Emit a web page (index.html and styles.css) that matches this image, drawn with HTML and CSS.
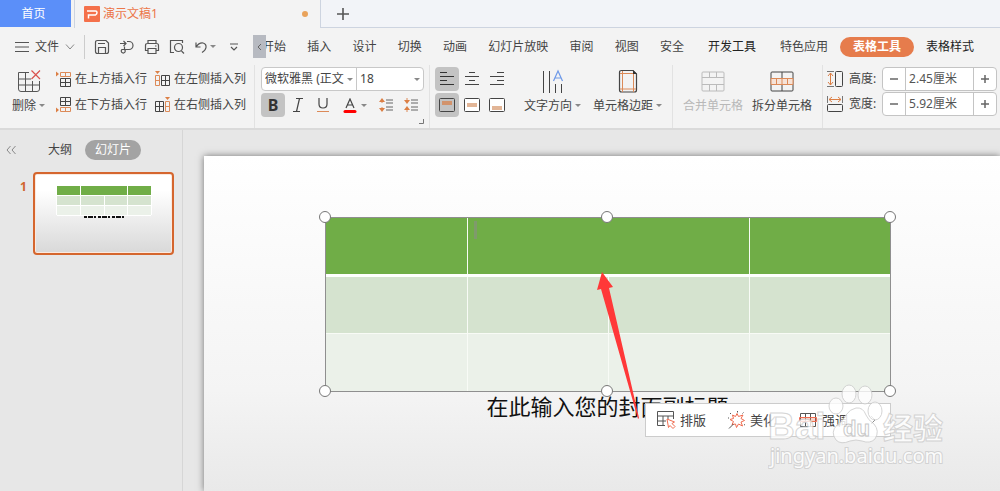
FILE: index.html
```html
<!DOCTYPE html>
<html lang="zh-CN">

<head>
    <meta charset="UTF-8">
    <meta name="viewport" content="width=device-width, initial-scale=1.0">
    <title>演示文稿1</title>
    <link rel="stylesheet" href="styles.css">
</head>

<body>

    <!-- 标签栏 -->
    <header class="tabs">
        <button class="tab-home">首页</button>
        <div class="tab-doc">
            <svg width="16" height="16" viewBox="0 0 16 16"><rect width="16" height="16" rx="1" fill="#f4704a"/><path d="M3 5H11.500Q13 5 13 6.500T11.500 9H4.500V12.500" fill="none" stroke="#fff" stroke-width="1.500"/></svg>
            <span>演示文稿1</span>
            <i class="unsaved"></i>
        </div>
        <div class="tab-rest">
            <button class="tab-new" aria-label="新建">
                <svg width="12" height="12" viewBox="0 0 12 12"><path d="M6 0V12M0 6H12" stroke="#555" stroke-width="1.600"/></svg>
            </button>
        </div>
    </header>

    <!-- 菜单栏 -->
    <div class="menu">
        <button class="file">
            <svg width="14" height="12" viewBox="0 0 14 12"><path d="M0 1.500H14M0 6H14M0 10.500H14" stroke="#555"/></svg>
            <span>文件</span>
            <svg width="10" height="6" viewBox="0 0 10 6"><path d="M1 .5L5 5L9 .5" fill="none" stroke="#888"/></svg>
        </button>
        <div class="quick">
            <button aria-label="保存"><svg width="16" height="16" viewBox="0 0 16 16"><path d="M1.500 3.500Q1.500 1.500 3.500 1.500H12L14.500 4V12.500Q14.500 14.500 12.500 14.500H3.500Q1.500 14.500 1.500 12.500ZM4 4.500H11M4.500 14V8.500H11.500V14"/></svg></button>
            <button aria-label="输出"><svg width="16" height="16" viewBox="0 0 16 16"><path d="M1 4.500H7M4.500 2L7 4.500L4.500 7M8 2.500H10A4 4 0 0 1 10 10.500H5.500M5.500 7.500V10.500A2 2 0 1 1 3 10.500H5.500"/></svg></button>
            <button aria-label="打印"><svg width="16" height="16" viewBox="0 0 16 16"><path d="M4 4.500V1.500H12V4.500M4 11.500H1.500V6.500Q1.500 4.500 3.500 4.500H12.500Q14.500 4.500 14.500 6.500V11.500H12M4 9.500H12V14.500H4ZM11 7H12.500"/></svg></button>
            <button aria-label="打印预览"><svg width="16" height="16" viewBox="0 0 16 16"><path d="M5 13.500H1.500V1.500H13.500V4M12.500 12L15 14.500"/><circle cx="9.500" cy="8.500" r="4"/></svg></button>
            <button class="undo" aria-label="撤销"><svg width="14" height="16" viewBox="0 0 14 16"><path d="M2 3.500V8H6.500M2 8Q5 3.500 9 4Q12.500 5 12 8.500Q11.500 11.500 8 13.500"/></svg><i class="caret"></i></button>
            <button aria-label="更多"><svg width="8" height="8" viewBox="0 0 8 8"><path d="M0 1H8M1 4L4 7L7 4"/></svg></button>
        </div>
        <button class="scroll-left" aria-label="向左">
            <svg width="5" height="8" viewBox="0 0 5 8"><path d="M4 1L1 4L4 7" fill="none" stroke="#666"/></svg>
        </button>
        <nav class="nav-main">
            <a href="#">开始</a>
            <a href="#">插入</a>
            <a href="#">设计</a>
            <a href="#">切换</a>
            <a href="#">动画</a>
            <a href="#">幻灯片放映</a>
            <a href="#">审阅</a>
            <a href="#">视图</a>
            <a href="#">安全</a>
        </nav>
        <nav class="nav-tools">
            <a href="#" class="strong">开发工具</a>
            <a href="#">特色应用</a>
            <a href="#" class="active">表格工具</a>
            <a href="#" class="strong">表格样式</a>
        </nav>
    </div>

    <!-- 功能区 -->
    <div class="ribbon">
        <div class="group g-insert">
            <button class="big">
                <svg width="24" height="24" viewBox="0 0 24 24" fill="none"><path d="M12 3.500H1.500V20Q1.500 22.500 4 22.500H20Q22.500 22.500 22.500 20V12M1.500 10H14M1.500 16H22.500M8.500 3.500V22.500M15.500 12V22.500" stroke="#555"/><path d="M14.500 1.500L23 10M23 1.500L14.500 10" stroke="#d9534f" stroke-width="1.200"/></svg>
                <span>删除<i class="caret"></i></span>
            </button>
            <div class="insert-grid">
                <button>
                    <svg width="15" height="16" viewBox="0 0 15 16" fill="none"><path d="M0 .5L3 3L0 5.500Z" fill="#dc7f45"/><path d="M4.500 1.500H14.500V5.500H4.500ZM9.500 1.500V5.500" stroke="#dc8a58"/><path d="M4.500 7.500H14.500V15.500H4.500ZM4.500 11.500H14.500M9.500 7.500V15.500" stroke="#444"/></svg>
                    在上方插入行
                </button>
                <button>
                    <svg width="15" height="16" viewBox="0 0 15 16" fill="none"><path d="M0 0H5L2.500 3Z" fill="#dc7f45"/><path d="M.5 4.500H4.500V14.500H.5ZM.5 9.500H4.500" stroke="#dc8a58"/><path d="M6.500 4.500H14.500V14.500H6.500ZM6.500 9.500H14.500M10.500 4.500V14.500" stroke="#444"/></svg>
                    在左侧插入列
                </button>
                <button>
                    <svg width="15" height="16" viewBox="0 0 15 16" fill="none"><path d="M0 10.500L3 13L0 15.500Z" fill="#dc7f45"/><path d="M4.500 .5H14.500V8.500H4.500ZM4.500 4.500H14.500M9.500 .5V8.500" stroke="#444"/><path d="M4.500 10.500H14.500V14.500H4.500ZM9.500 10.500V14.500" stroke="#dc8a58"/></svg>
                    在下方插入行
                </button>
                <button>
                    <svg width="15" height="16" viewBox="0 0 15 16" fill="none"><path d="M10 0H15L12.500 3Z" fill="#dc7f45"/><path d="M10.500 4.500H14.500V14.500H10.500ZM10.500 9.500H14.500" stroke="#dc8a58"/><path d="M.5 4.500H8.500V14.500H.5ZM.5 9.500H8.500M4.500 4.500V14.500" stroke="#444"/></svg>
                    在右侧插入列
                </button>
            </div>
        </div>

        <div class="group g-font">
            <div class="font-row">
                <div class="pick pick-font"><select aria-label="字体"><option>微软雅黑 (正文</option></select></div>
                <div class="pick pick-size"><select aria-label="字号"><option>18</option></select></div>
            </div>
            <div class="tool-row">
                <button class="tool on bold">B</button>
                <button class="tool" aria-label="斜体"><svg width="12" height="14" viewBox="0 0 12 14"><path d="M4 .5H11M1 13.500H8M7.500 .5L4.500 13.500" stroke="#444" stroke-width="1.200" fill="none"/></svg></button>
                <button class="tool" aria-label="下划线"><svg width="12" height="14" viewBox="0 0 12 14" fill="none"><path d="M2 0V6Q2 10 6 10T10 6V0" stroke="#444" stroke-width="1.200"/><path d="M0 13.500H12" stroke="#dc8a58"/></svg></button>
                <button class="tool color" aria-label="字体颜色"><svg width="14" height="15" viewBox="0 0 14 15" fill="none"><path d="M3 10L7 1L11 10M4.500 7H9.500" stroke="#444" stroke-width="1.200"/><path d="M2 13.500H12" stroke="#f00" stroke-width="3" stroke-linecap="round"/></svg><i class="caret"></i></button>
                <button class="tool" aria-label="增大行距"><svg width="15" height="14" viewBox="0 0 15 14" fill="none"><path d="M7 2H14M7 5H14M7 9H14M7 12H14" stroke="#666"/><path d="M3 1V5M3 9V13" stroke="#dc8a58"/><path d="M0 4L3 0L6 4ZM0 10H6L3 14Z" fill="#dc7f45"/></svg></button>
                <button class="tool" aria-label="减小行距"><svg width="15" height="14" viewBox="0 0 15 14" fill="none"><path d="M7 2H14M7 5H14M7 9H14M7 12H14" stroke="#666"/><path d="M3 0V4M3 10V14" stroke="#dc8a58"/><path d="M0 2H6L3 6ZM0 12L3 8L6 12Z" fill="#dc7f45"/></svg></button>
            </div>
            <svg class="launcher" width="5" height="5" viewBox="0 0 5 5"><path d="M4.500 0V4.500H0" fill="none" stroke="#777"/></svg>
        </div>

        <div class="group g-align">
            <div class="align-grid">
                <button class="tool on" aria-label="左对齐"><svg width="14" height="14" viewBox="0 0 14 14"><path d="M0 .5H7M0 4.500H14M0 8.500H7M0 12.500H14" stroke="#333"/></svg></button>
                <button class="tool" aria-label="居中"><svg width="14" height="14" viewBox="0 0 14 14"><path d="M4 .5H10M0 4.500H14M4 8.500H10M0 12.500H14" stroke="#444"/></svg></button>
                <button class="tool" aria-label="右对齐"><svg width="14" height="14" viewBox="0 0 14 14"><path d="M7 .5H14M0 4.500H14M7 8.500H14M0 12.500H14" stroke="#444"/></svg></button>
                <button class="tool on" aria-label="顶端对齐"><svg width="16" height="14" viewBox="0 0 16 14"><rect x=".5" y=".5" width="15" height="13" rx="1" fill="none" stroke="#444"/><rect x="3" y="3" width="10" height="4" fill="#d2936c"/></svg></button>
                <button class="tool" aria-label="垂直居中"><svg width="16" height="14" viewBox="0 0 16 14"><rect x=".5" y=".5" width="15" height="13" rx="1" fill="#fff" stroke="#444"/><rect x="3" y="5" width="10" height="4" fill="#e2b596"/></svg></button>
                <button class="tool" aria-label="底端对齐"><svg width="16" height="14" viewBox="0 0 16 14"><rect x=".5" y=".5" width="15" height="13" rx="1" fill="#fff" stroke="#444"/><rect x="3" y="8" width="10" height="4" fill="#e2b596"/></svg></button>
            </div>
            <button class="big">
                <svg width="24" height="24" viewBox="0 0 24 24" fill="none"><path d="M2.500 2V24M8.500 2V24M14.500 15V24M20.500 15V24" stroke="#444"/><path d="M12.500 12L17 2L21.500 12M14 9H20" stroke="#6f9ae8" stroke-width="1.200"/></svg>
                <span>文字方向<i class="caret"></i></span>
            </button>
            <button class="big">
                <svg width="24" height="24" viewBox="0 0 24 24" fill="none"><path d="M3.500 3.500Q3.500 1.500 5.500 1.500H17L20.500 5V21Q20.500 23 18.500 23H5.500Q3.500 23 3.500 21Z" stroke="#444" stroke-width="1.200"/><path d="M6.500 2V23M17.500 5V23M4 4.500H18M4 20H20" stroke="#dc8a58"/><path d="M17 1L21 5H17Z" fill="#333"/></svg>
                <span>单元格边距<i class="caret"></i></span>
            </button>
        </div>

        <div class="group g-merge">
            <button class="big" disabled>
                <svg width="24" height="24" viewBox="0 0 24 24" fill="none"><rect x="1" y="3" width="22" height="19" rx="1" stroke="#bbb"/><path d="M1 8.500H23M1 15.500H23M8.500 3V8.500M15.500 3V8.500M8.500 15.500V22M15.500 15.500V22" stroke="#bbb"/></svg>
                <span>合并单元格</span>
            </button>
            <button class="big">
                <svg width="24" height="24" viewBox="0 0 24 24" fill="none"><rect x="1" y="3" width="22" height="19" rx="1" stroke="#444"/><path d="M12 3V9M12 16V22" stroke="#444"/><path d="M1 9.500H23V15.500H1ZM6.500 9.500V15.500M17.500 9.500V15.500M12 9.500V15.500" fill="#f6e3d8" stroke="#dc8a58"/></svg>
                <span>拆分单元格</span>
            </button>
        </div>

        <div class="group g-size">
            <div class="size-row">
                <svg width="16" height="16" viewBox="0 0 16 16" fill="none"><path d="M0 .5H7M0 15.500H7" stroke="#777"/><path d="M3.500 2V14M1 5L3.500 2L6 5M1 11L3.500 14L6 11" stroke="#dc7f45"/><rect x="8.500" y=".5" width="7" height="15" rx="1" stroke="#444"/></svg>
                <label for="rowHeight">高度:</label>
                <div class="stepper">
                    <button aria-label="减小高度"><svg width="8" height="8" viewBox="0 0 8 8"><path d="M0 4H8" stroke="#666" stroke-width="1.500"/></svg></button>
                    <input type="text" id="rowHeight" value="2.45厘米">
                    <button aria-label="增大高度"><svg width="8" height="8" viewBox="0 0 8 8"><path d="M0 4H8M4 0V8" stroke="#666" stroke-width="1.500"/></svg></button>
                </div>
            </div>
            <div class="size-row">
                <svg width="16" height="16" viewBox="0 0 16 16" fill="none"><path d="M.5 0V7M15.500 0V7" stroke="#777"/><path d="M2 3.500H14M5 1L2 3.500L5 6M11 1L14 3.500L11 6" stroke="#dc7f45"/><rect x=".5" y="8.500" width="15" height="7" rx="1" stroke="#444"/></svg>
                <label for="colWidth">宽度:</label>
                <div class="stepper">
                    <button aria-label="减小宽度"><svg width="8" height="8" viewBox="0 0 8 8"><path d="M0 4H8" stroke="#666" stroke-width="1.500"/></svg></button>
                    <input type="text" id="colWidth" value="5.92厘米">
                    <button aria-label="增大宽度"><svg width="8" height="8" viewBox="0 0 8 8"><path d="M0 4H8M4 0V8" stroke="#666" stroke-width="1.500"/></svg></button>
                </div>
            </div>
        </div>
    </div>

    <main class="workspace">
        <!-- 幻灯片列表 -->
        <aside class="sidebar">
            <div class="side-head">
                <button class="collapse" aria-label="收起"><svg width="10" height="8" viewBox="0 0 10 8"><path d="M4.500 0L1 4L4.500 8M9.500 0L6 4L9.500 8" fill="none" stroke="#888"/></svg></button>
                <button class="side-tab">大纲</button>
                <button class="side-tab current">幻灯片</button>
            </div>
            <div class="thumb-row">
                <span class="thumb-num">1</span>
                <div class="thumb">
                    <svg width="135" height="77" viewBox="0 0 135 77">
                        <rect x="21" y="11" width="94" height="9" fill="#70ad47"/>
                        <rect x="21" y="21" width="94" height="9" fill="#d5e3cf"/>
                        <rect x="21" y="30" width="94" height="10" fill="#ebf1e9"/>
                        <path d="M20.500 11V40M44.500 11V40M91.500 11V40M68.500 21V40M115.500 11V40M21 20.500H115M21 30.500H115M21 40.500H115" stroke="#fff"/>
                        <path d="M48 42H88" stroke="#111" stroke-width="2" stroke-dasharray="3 1 5 1 2 2"/>
                    </svg>
                </div>
            </div>
        </aside>

        <!-- 编辑区 -->
        <section class="stage">
            <div class="slide">
                <div class="table-frame">
                    <table>
                        <tbody>
                            <tr class="head"><td></td><td colspan="2"></td><td></td></tr>
                            <tr class="odd"><td></td><td></td><td></td><td></td></tr>
                            <tr class="even"><td></td><td></td><td></td><td></td></tr>
                        </tbody>
                    </table>
                    <i class="text-cursor"></i>
                    <i class="handle top left"></i>
                    <i class="handle top mid"></i>
                    <i class="handle top right"></i>
                    <i class="handle bottom left"></i>
                    <i class="handle bottom mid"></i>
                    <i class="handle bottom right"></i>
                    <svg class="arrow" width="44" height="148" viewBox="0 0 44 148"><path d="M5 0L16 15L12 16L42 146L41 147L4 17L0 18Z" fill="#ff3838"/></svg>
                    <div class="float-bar">
                        <button>
                            <svg width="20" height="20" viewBox="0 0 20 20" fill="none"><path d="M9 15.500H1.500V1.500H17.500V9M1.500 6H17.500M7 6V15.500M1.500 11H10M12 6V9" stroke="#555"/><path d="M11 9L18.500 12L16 13.500L19 16.500L17 18.500L14 15.500L12.500 17.500Z" fill="#fff" stroke="#ef6c50"/></svg>
                            排版
                        </button>
                        <button>
                            <svg width="18" height="18" viewBox="0 0 18 18" fill="none"><path d="M9 2.500L10.500 5.500L15 4L13 7.500L16.500 9.500L13 11L14.500 15L10.500 13L8.500 16.500L7.500 13L4 13.500L5.500 10.500L2 8.500L5.500 7.500L4.500 4L7.500 5.500Z" stroke="#ef6c50"/><path d="M1 17.500L5.500 13M9.500 0V1.500M2 2L3 3M15.500 1.500L14.500 2.500M17 14L16 13.500M0 7H1" stroke="#555"/></svg>
                            美化
                        </button>
                        <button>
                            <svg width="20" height="16" viewBox="0 0 20 16" fill="none"><path d="M2.500 1.500H17.500V14.500H2.500ZM7.500 1.500V14.500M12.500 1.500V14.500" stroke="#555"/><path d="M1.500 5.500H18.500V9.500H1.500Z" fill="#ef6c50" fill-opacity=".3" stroke="#ef6c50"/></svg>
                            强调
                        </button>
                        <button class="next" aria-label="更多"><svg width="6" height="10" viewBox="0 0 6 10"><path d="M1 1L5 5L1 9" fill="none" stroke="#888"/></svg></button>
                    </div>
                </div>
                <p class="subtitle">在此输入您的封面副标题</p>
            </div>
        </section>

        <!-- 水印 -->
        <div class="watermark">
            <svg width="184" height="92" viewBox="0 0 184 92">
                <text class="wm-shape wm-bai" x="0" y="61">Bai</text>
                <g class="wm-shape">
                    <ellipse cx="68" cy="28" rx="7" ry="8"/>
                    <ellipse cx="81" cy="16" rx="7" ry="9"/>
                    <ellipse cx="97" cy="17" rx="7" ry="9"/>
                    <ellipse cx="107" cy="33" rx="7" ry="9"/>
                    <path d="M88 30Q95 29 98 37Q100 42 106 46Q112 53 107 61Q102 66 94 63Q88 61 82 63Q73 67 68 62Q62 54 69 47Q75 43 78 37Q82 31 88 30Z"/>
                </g>
                <text class="wm-du" x="75" y="58">du</text>
                <text class="wm-shape wm-cn" x="115" y="61">经验</text>
                <text class="wm-shape wm-url" x="2" y="85">jingyan.baidu.com</text>
            </svg>
        </div>
    </main>

</body>

</html>
```
FILE: styles.css
```css
* {
    box-sizing: border-box;
}

body {
    margin: 0;
    height: 100vh;
    display: flex;
    flex-direction: column;
    overflow: hidden;
    background: #f3f3f3;
    color: #444;
    font-family: "Noto Sans", "Noto Sans CJK SC", sans-serif;
    font-size: 12px;
    line-height: 16px;
}

button {
    border: 0;
    padding: 0;
    background: none;
    color: inherit;
    font: inherit;
    white-space: nowrap;
    display: flex;
    align-items: center;
    justify-content: center;
}

a {
    color: inherit;
    text-decoration: none;
    white-space: nowrap;
}

svg {
    display: block;
    flex: none;
}

.caret {
    display: inline-block;
    border: 3px solid transparent;
    border-top: 3px solid #888;
    border-bottom: 0;
}

/* 标签栏 */
.tabs {
    display: flex;
    height: 28px;
    flex: none;
}

.tab-home {
    width: 71px;
    height: 27px;
    background: #5b8ff9;
    color: #fff;
    padding-right: 4px;
}

.tab-doc {
    display: flex;
    align-items: center;
    gap: 3px;
    width: 247px;
    margin-left: 3px;
    padding: 0 12px 0 9px;
    border-left: 1px solid #cdd4e0;
    border-right: 1px solid #cdd4e0;
    color: #ec7648;
}

.unsaved {
    width: 6px;
    height: 6px;
    margin-left: auto;
    border-radius: 50%;
    background: #e9a35b;
}

.tab-rest {
    flex: 1;
    display: flex;
    align-items: center;
    padding-left: 16px;
    background: #f2f4f8;
    border-bottom: 1px solid #cdd4e0;
}

/* 菜单栏 */
.menu {
    display: flex;
    align-items: center;
    height: 37px;
    flex: none;
    padding-left: 15px;
}

.file {
    gap: 6px;
    height: 24px;
    padding-right: 9px;
    border-right: 1px solid #ccc;
}

.quick {
    display: flex;
    align-items: center;
    gap: 9px;
    width: 168px;
    padding-left: 9px;
}

.quick svg {
    fill: none;
    stroke: #555;
    stroke-width: 1.2;
}

.undo {
    gap: 2px;
    margin-right: 5px;
}

.scroll-left {
    width: 13px;
    height: 23px;
    margin-right: -4px;
    background: #b7bac1;
    position: relative;
    z-index: 1;
}

.nav-main {
    display: flex;
    justify-content: space-between;
    width: 422px;
}

.nav-tools {
    display: flex;
    align-items: center;
    gap: 12px;
    padding-left: 24px;
}

.nav-tools a:first-child {
    margin-right: 12px;
}

.strong {
    color: #222;
}

.active {
    padding: 2px 13px;
    border-radius: 10px;
    background: #e67c4c;
    color: #fff;
    font-weight: bold;
}

/* 功能区 */
.ribbon {
    display: flex;
    height: 65px;
    flex: none;
    border-bottom: 2px solid #dadada;
}

.group {
    display: flex;
    flex: none;
    border-right: 1px solid #e2e2e2;
}

.group:last-child {
    border-right: 0;
}

.big {
    flex-direction: column;
    justify-content: flex-start;
    gap: 5px;
    padding-top: 4px;
}

.big .caret {
    margin-left: 3px;
    vertical-align: 3px;
}

.big:disabled {
    color: #b8b8b8;
}

.g-insert {
    gap: 11px;
    padding: 0 8px 0 12px;
}

.insert-grid {
    display: grid;
    grid-template-columns: auto auto;
    grid-auto-rows: 26px;
    column-gap: 8px;
    padding-top: 1px;
}

.insert-grid button {
    gap: 4px;
}

.g-font {
    flex-direction: column;
    gap: 2px;
    padding: 2px 5px 0 6px;
    position: relative;
}

.font-row {
    display: flex;
    width: 163px;
    height: 24px;
    border: 1px solid #c8c8c8;
    border-radius: 4px;
    background: #fff;
}

.pick {
    position: relative;
    display: flex;
}

.pick::after {
    content: "";
    position: absolute;
    right: 3px;
    top: 10px;
    border: 3px solid transparent;
    border-top-color: #888;
    border-bottom: 0;
}

.pick-font {
    width: 95px;
    border-right: 1px solid #c8c8c8;
}

.pick-size {
    flex: 1;
}

.pick select {
    appearance: none;
    width: 100%;
    border: 0;
    padding: 0 0 0 3px;
    background: none;
    color: #444;
    font: inherit;
}

.tool-row {
    display: flex;
    gap: 1px;
}

.tool {
    width: 24px;
    height: 24px;
    border-radius: 4px;
}

.tool.on {
    background: #c3c3c3;
}

.bold {
    font-size: 16px;
    font-weight: bold;
    color: #333;
}

.color {
    width: 37px;
    gap: 4px;
}

.launcher {
    position: absolute;
    right: 5px;
    bottom: 4px;
}

.g-align {
    gap: 12px;
    padding: 0 10px 0 5px;
}

.align-grid {
    display: grid;
    grid-template-columns: repeat(3, 24px);
    grid-auto-rows: 24px;
    gap: 2px 1px;
    padding-top: 2px;
    margin-right: 3px;
}

.g-merge {
    gap: 9px;
    padding: 0 10px;
}

.g-size {
    flex-direction: column;
    gap: 1px;
    padding: 2px 0 0 4px;
}

.size-row {
    display: flex;
    align-items: center;
}

.size-row label {
    width: 33px;
    margin-left: 6px;
}

.stepper {
    display: flex;
    height: 24px;
    border: 1px solid #c4c4c4;
    border-radius: 4px;
    background: #fff;
}

.stepper button {
    width: 22px;
}

.stepper input {
    width: 69px;
    border: solid #c4c4c4;
    border-width: 0 1px;
    padding: 0 3px;
    background: none;
    color: #555;
    font: inherit;
}

/* 工作区 */
.workspace {
    display: flex;
    flex: 1;
    min-height: 0;
    background: #e7e7e7;
    position: relative;
}

.sidebar {
    width: 183px;
    flex: none;
    border-right: 1px solid #d6d6d6;
}

.side-head {
    display: flex;
    align-items: center;
    height: 42px;
    padding: 0 0 2px 6px;
}

.side-tab {
    height: 20px;
    padding: 0 10px;
    border-radius: 10px;
}

.collapse {
    margin-right: 22px;
}

.side-tab.current {
    margin-left: 3px;
    background: #a3a3a3;
    color: #fff;
}

.thumb-row {
    display: flex;
    padding-left: 20px;
}

.thumb-num {
    width: 13px;
    padding-top: 7px;
    color: #d0652e;
    font-weight: bold;
}

.thumb {
    border: 2px solid #d5662e;
    border-radius: 4px;
    padding: 1px;
    background: #fbe9df;
}

.thumb svg {
    background: linear-gradient(#fff 20%, #d9d9d9);
}

.stage {
    flex: 1;
    min-width: 0;
    display: flex;
    padding: 26px 0 0 21px;
    overflow: hidden;
}

.slide {
    flex: 1;
    padding: 61px 0 0 121px;
    background: linear-gradient(#fff, #f4f4f4 70%, #e9e9e9);
    box-shadow: 0 0 7px rgba(0, 0, 0, 0.5);
}

/* 选中的表格 */
.table-frame {
    position: relative;
    width: 566px;
    border: 1px solid #8f8f8f;
}

.table-frame table {
    width: 564px;
    table-layout: fixed;
    border-collapse: collapse;
}

.table-frame td {
    height: 58px;
    padding: 0;
    border: 1px solid #f8fbf6;
    border-top: 0;
    border-bottom: 0;
}

.table-frame .head td {
    height: 57px;
}

.table-frame td:first-child {
    border-left: 0;
}

.table-frame td:last-child {
    border-right: 0;
}

.head {
    background: #70ad47;
    border-bottom: 3px solid #fff;
}

.odd {
    background: #d5e3cf;
    border-bottom: 1px solid #f8fbf6;
}

.even {
    background: #ebf1e9;
}

.text-cursor {
    position: absolute;
    left: 148px;
    top: 3px;
    width: 3px;
    height: 18px;
    background: #7f9a6c;
}

.handle {
    position: absolute;
    width: 12px;
    height: 12px;
    border: 1px solid #777;
    border-radius: 50%;
    background: #fff;
}

.handle.top {
    top: -7px;
}

.handle.bottom {
    bottom: -6px;
}

.handle.left {
    left: -7px;
}

.handle.mid {
    left: 50%;
    margin-left: -7px;
}

.handle.right {
    right: -6px;
}

.arrow {
    position: absolute;
    left: 271px;
    top: 54px;
    z-index: 2;
}

.float-bar {
    position: absolute;
    left: 319px;
    top: 185px;
    z-index: 1;
    display: flex;
    align-items: center;
    gap: 22px;
    width: 246px;
    height: 34px;
    padding-left: 10px;
    border: 1px solid #ccc;
    background: #fff;
}

.float-bar button {
    gap: 4px;
    font-size: 13px;
}

.subtitle {
    width: 565px;
    margin: 0;
    color: #111;
    font-size: 22px;
    line-height: 28px;
    text-align: center;
}

/* 水印 */
.watermark {
    position: absolute;
    right: 48px;
    bottom: 21px;
    z-index: 3;
    opacity: 0.8;
}

.wm-shape {
    fill: #fff;
    stroke: #ccc;
    stroke-width: 1;
}

.wm-bai {
    font: bold 37px "Liberation Sans", sans-serif;
}

.wm-du {
    fill: #fff;
    stroke: #bbb;
    font: bold 22px "Liberation Sans", sans-serif;
}

.wm-cn {
    font: bold 30px "Noto Sans CJK SC", sans-serif;
}

.wm-url {
    stroke-width: 2;
    paint-order: stroke;
    font: 20px "Noto Sans", sans-serif;
}
```
